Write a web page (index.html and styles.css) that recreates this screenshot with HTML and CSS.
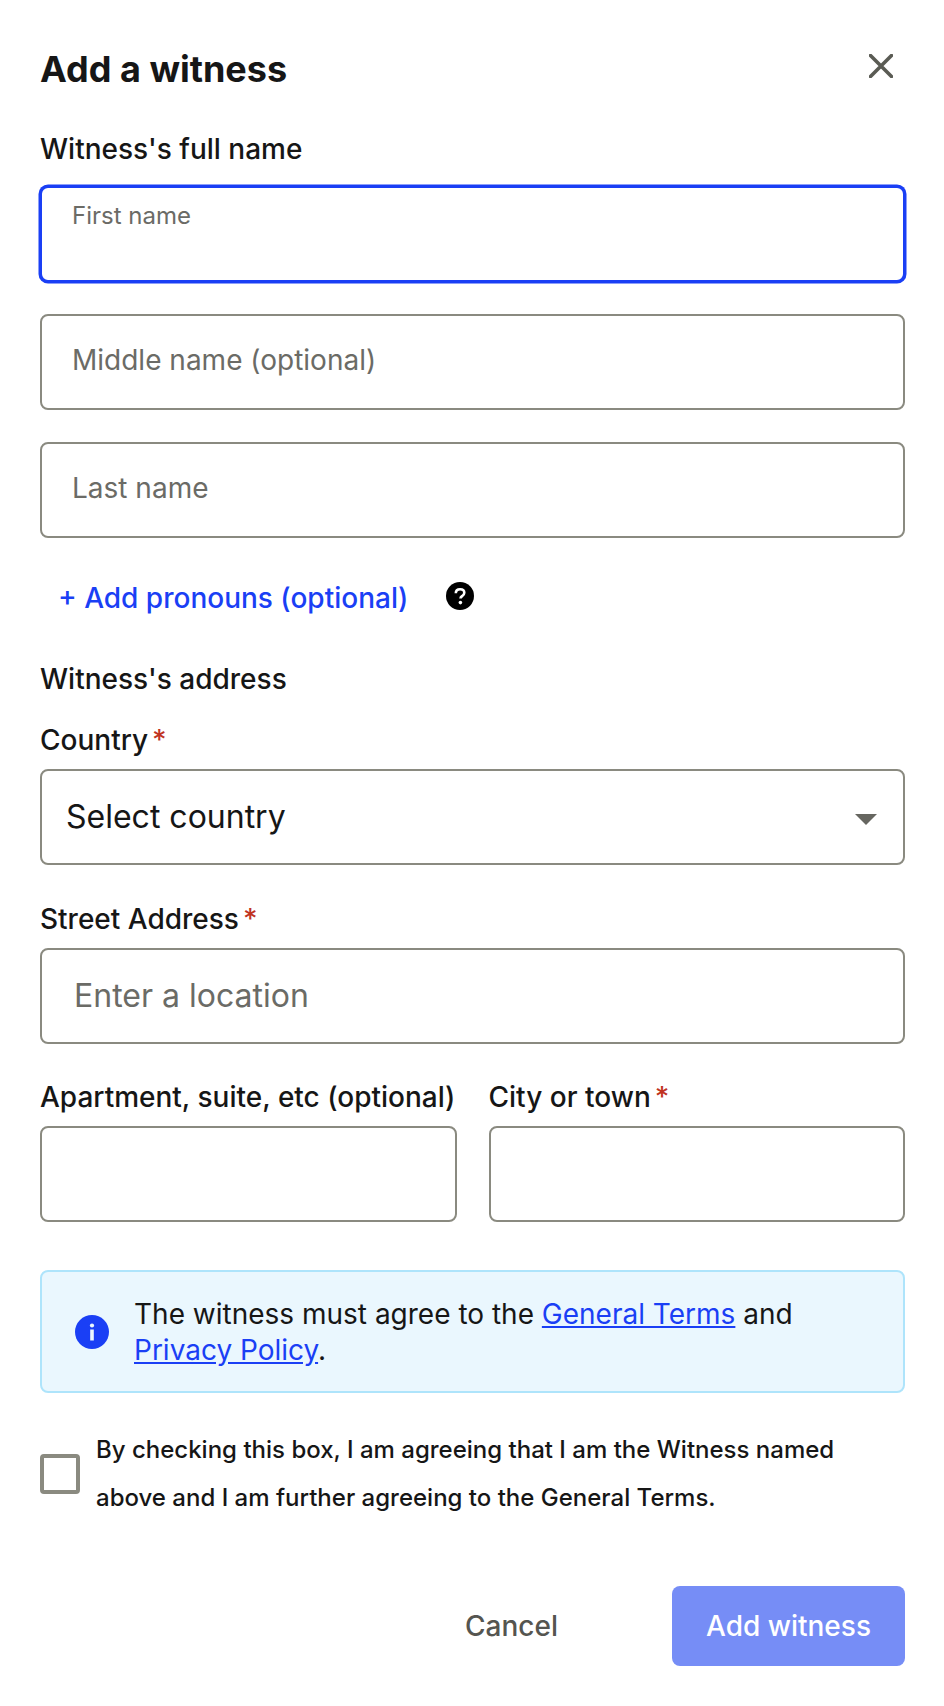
FILE: index.html
```html
<!DOCTYPE html>
<html lang="en">
<head>
    <meta charset="UTF-8">
    <meta name="viewport" content="width=device-width, initial-scale=1.0">
    <title>Add a witness</title>
    <link rel="stylesheet" href="styles.css">
</head>
<body>
    <main class="modal">
        <header class="modal-header">
            <h1>Add a witness</h1>
            <button class="close-btn" type="button" aria-label="Close">
                <svg width="24" height="24" viewBox="0 0 24 24"><path d="M1.5 1.5l21 21M22.5 1.5l-21 21" stroke="#5a5b54" stroke-width="3.6" stroke-linecap="round" fill="none"/></svg>
            </button>
        </header>

        <form>
            <label class="label label-name">Witness's full name</label>
            <div class="field field-focus">
                <span class="float-label">First name</span>
                <input type="text" class="input input-focus">
            </div>
            <input type="text" class="input input-stack" placeholder="Middle name (optional)">
            <input type="text" class="input input-stack" placeholder="Last name">

            <div class="pronouns">
                <button type="button" class="link-btn">+ Add pronouns (optional)</button>
                <svg class="help-icon" width="28" height="28" viewBox="0 0 28 28">
                    <circle cx="14" cy="14" r="14" fill="#000"/>
                    <path d="M9.8 11.2c0-2.6 1.9-4 4.3-4s4.2 1.4 4.2 3.6c0 1.8-1.1 2.6-2.2 3.3-1 .7-1.6 1.1-1.6 2.3" stroke="#fff" stroke-width="2.6" fill="none"/>
                    <circle cx="14.4" cy="20.6" r="1.8" fill="#fff"/>
                </svg>
            </div>

            <div class="section-title">Witness's address</div>
            <label class="label label-country">Country<span class="req">*</span></label>
            <div class="select-wrap">
                <select class="select">
                    <option>Select country</option>
                </select>
                <svg class="select-arrow" width="22" height="11" viewBox="0 0 22 11"><path d="M0 0h22L11 11z" fill="#666660"/></svg>
            </div>

            <label class="label label-street">Street Address<span class="req">*</span></label>
            <input type="text" class="input input-location" placeholder="Enter a location">

            <div class="two-col">
                <div>
                    <label class="label">Apartment, suite, etc (optional)</label>
                    <input type="text" class="input">
                </div>
                <div>
                    <label class="label">City or town<span class="req">*</span></label>
                    <input type="text" class="input">
                </div>
            </div>

            <div class="notice">
                <svg class="notice-icon" width="34" height="34" viewBox="0 0 34 34">
                    <circle cx="17" cy="17" r="17" fill="#1a3ff5"/>
                    <rect x="15.2" y="14.5" width="3.6" height="11" fill="#eaf7fe"/>
                    <circle cx="17" cy="10.5" r="2.1" fill="#eaf7fe"/>
                </svg>
                <p>The witness must agree to the <a href="#">General Terms</a> and <a href="#">Privacy Policy</a>.</p>
            </div>

            <div class="agree">
                <input type="checkbox" class="checkbox" id="agree">
                <label for="agree">By checking this box, I am agreeing that I am the Witness named above and I am further agreeing to the General Terms.</label>
            </div>

            <div class="actions">
                <button type="button" class="btn-cancel">Cancel</button>
                <button type="button" class="btn-submit">Add witness</button>
            </div>
        </form>
    </main>
</body>
</html>
```

FILE: styles.css
```css
* {
    box-sizing: border-box;
}

body {
    margin: 0;
    background: #fff;
    color: #161616;
    font-family: Inter, "Liberation Sans", sans-serif;
}

.modal {
    padding: 47px 39px 40px 40px;
}

.modal-header {
    display: flex;
    justify-content: space-between;
    align-items: flex-start;
}

.modal-header h1 {
    margin: 0;
    font-size: 36px;
    line-height: 44px;
    font-weight: 700;
}

.close-btn {
    display: block;
    margin: 7px 12px 0 0;
    padding: 0;
    border: none;
    background: none;
    line-height: 0;
}

.label,
.section-title {
    display: block;
    font-size: 28px;
    line-height: 36px;
    font-weight: 500;
}

.label-name {
    margin: 40px 0 19px;
}

.input,
.select {
    display: block;
    width: 100%;
    height: 96px;
    border: 2px solid #8a8a80;
    border-radius: 8px;
    background: #fff;
    font-family: inherit;
    color: #161616;
}

.input {
    padding: 0 30px 5px;
    font-size: 28px;
}

.input::placeholder {
    color: #6b6b66;
    opacity: 1;
}

.input-stack {
    margin-top: 32px;
}

.field {
    position: relative;
}

.input-focus {
    border-color: #1a3ff5;
    box-shadow: 0 0 0 1.5px #1a3ff5;
    outline: none;
}

.float-label {
    position: absolute;
    left: 32px;
    top: 15px;
    font-size: 24px;
    line-height: 30px;
    color: #6b6b66;
}

.pronouns {
    display: flex;
    align-items: center;
    gap: 38px;
    margin-top: 41px;
    padding-left: 18px;
}

.link-btn {
    padding: 1px 0 0;
    border: none;
    background: none;
    font-family: inherit;
    font-size: 28px;
    line-height: 36px;
    font-weight: 500;
    color: #1a3ff5;
}

.help-icon {
    margin-top: -3px;
}

.section-title {
    margin-top: 45px;
}

.label-country {
    margin: 25px 0 11px;
}

.req {
    margin-left: 4px;
    color: #c0331f;
}

.select-wrap {
    position: relative;
}

.select {
    appearance: none;
    padding: 0 24px 2px;
    font-size: 32px;
}

.select-arrow {
    position: absolute;
    right: 28px;
    top: 45px;
}

.label-street {
    margin: 36px 0 11px;
}

.input-location {
    padding: 0 32px 2px;
    font-size: 32px;
}

.two-col {
    display: grid;
    grid-template-columns: 1fr 1fr;
    gap: 32px;
    margin-top: 35px;
}

.two-col .label {
    margin-bottom: 11px;
    white-space: nowrap;
}

.notice {
    display: flex;
    align-items: center;
    gap: 25px;
    height: 123px;
    margin-top: 48px;
    padding: 0 33px;
    border: 2px solid #aee4fb;
    border-radius: 8px;
    background: #eaf7fe;
}

.notice-icon {
    flex: none;
}

.notice p {
    margin: 0;
    font-size: 28px;
    line-height: 36px;
}

.notice a {
    color: #1a3ff5;
}

.agree {
    display: flex;
    align-items: center;
    gap: 16px;
    margin-top: 33px;
}

.checkbox {
    appearance: none;
    flex: none;
    width: 40px;
    height: 40px;
    margin: 0;
    border: 4px solid #8a8a80;
    border-radius: 4px;
    background: #fff;
}

.agree label {
    font-size: 24px;
    line-height: 48px;
    font-weight: 500;
}

.actions {
    display: flex;
    justify-content: flex-end;
    align-items: center;
    margin-top: 64px;
}

.btn-cancel {
    margin-right: 114px;
    padding: 0;
    border: none;
    background: none;
    font-family: inherit;
    font-size: 28px;
    font-weight: 500;
    color: #555550;
}

.btn-submit {
    width: 233px;
    height: 80px;
    border: none;
    border-radius: 8px;
    background: #768df6;
    font-family: inherit;
    font-size: 28px;
    font-weight: 500;
    color: #fff;
}
```
